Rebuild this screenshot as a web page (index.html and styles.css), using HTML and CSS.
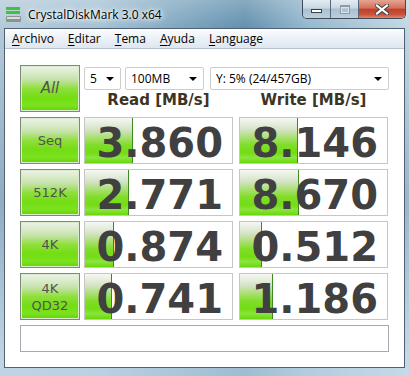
FILE: index.html
```html
<!DOCTYPE html>
<html lang="es">
<head>
    <meta charset="UTF-8">
    <meta name="viewport" content="width=device-width, initial-scale=1.0">
    <title>CrystalDiskMark 3.0 x64</title>
    <link rel="stylesheet" href="styles.css">
</head>
<body>
    <div class="window">
        <div class="titlebar">
            <svg class="app-icon" width="17" height="17" viewBox="0 0 17 17">
                <rect x="1" y="1" width="14" height="3" fill="#3cc43c"/>
                <rect x="1" y="5" width="14" height="3" fill="#3cc43c"/>
                <rect x="1" y="10" width="15" height="6" rx="1" fill="#8c9296"/>
                <rect x="2" y="11" width="13" height="2" fill="#d8dcde"/>
                <rect x="3" y="14" width="2" height="1" fill="#3cc43c"/>
            </svg>
            <span class="title">CrystalDiskMark 3.0 x64</span>
            <div class="caption">
                <div class="cap-btn min"><span class="min-glyph"></span></div>
                <div class="cap-btn max"><span class="max-glyph"></span></div>
                <div class="cap-btn close">
                    <svg width="14" height="11" viewBox="0 0 14 11">
                        <path d="M2 1.5 L12 9.5 M12 1.5 L2 9.5" stroke="#3a3f48" stroke-width="4" stroke-linecap="square"/>
                        <path d="M2 1.5 L12 9.5 M12 1.5 L2 9.5" stroke="#ffffff" stroke-width="2.2" stroke-linecap="square"/>
                    </svg>
                </div>
            </div>
        </div>

        <div class="client">
            <div class="menubar">
                <span class="menu"><u>A</u>rchivo</span>
                <span class="menu"><u>E</u>ditar</span>
                <span class="menu"><u>T</u>ema</span>
                <span class="menu"><u>A</u>yuda</span>
                <span class="menu"><u>L</u>anguage</span>
            </div>

            <div class="main">
                <div class="row top-row">
                    <div class="test-btn all">All</div>
                    <div class="settings">
                        <div class="combos">
                            <div class="combo count">5<span class="arrow"></span></div>
                            <div class="combo size">100MB<span class="arrow"></span></div>
                            <div class="combo drive">Y: 5% (24/457GB)<span class="arrow"></span></div>
                        </div>
                        <div class="headers">
                            <div class="header">Read [MB/s]</div>
                            <div class="header write-head">Write [MB/s]</div>
                        </div>
                    </div>
                </div>

                <div class="row">
                    <div class="test-btn">Seq</div>
                    <div class="result"><div class="bar" style="width: 47px"></div><span class="value">3.860</span></div>
                    <div class="result write"><div class="bar" style="width: 57px"></div><span class="value">8.146</span></div>
                </div>

                <div class="row">
                    <div class="test-btn">512K</div>
                    <div class="result"><div class="bar" style="width: 43px"></div><span class="value">2.771</span></div>
                    <div class="result write"><div class="bar" style="width: 58px"></div><span class="value">8.670</span></div>
                </div>

                <div class="row">
                    <div class="test-btn">4K</div>
                    <div class="result"><div class="bar" style="width: 28px"></div><span class="value">0.874</span></div>
                    <div class="result write"><div class="bar" style="width: 21px"></div><span class="value">0.512</span></div>
                </div>

                <div class="row">
                    <div class="test-btn two-line">4K<br>QD32</div>
                    <div class="result"><div class="bar" style="width: 26px"></div><span class="value">0.741</span></div>
                    <div class="result write"><div class="bar" style="width: 32px"></div><span class="value">1.186</span></div>
                </div>

                <div class="comment"></div>
            </div>
        </div>
    </div>
</body>
</html>
```

FILE: styles.css
```css
body {
    margin: 0;
    font-family: "Open Sans", "DejaVu Sans", sans-serif;
}

.window {
    width: 409px;
    height: 376px;
    box-sizing: border-box;
    padding: 0 4px 8px 4px;
    background:
        linear-gradient(to bottom, rgba(255, 255, 255, 0.25) 0%, rgba(255, 255, 255, 0) 30px, rgba(40, 90, 130, 0.25) 200px, rgba(200, 220, 235, 0.6) 360px),
        linear-gradient(90deg, #b3c9d8 0%, #a2c0d4 25%, #7aa3bd 45%, #5f8eac 60%, #92b6cc 75%, #c2d6e3 100%);
}

.titlebar {
    height: 28px;
    display: flex;
    align-items: center;
}

.app-icon {
    margin-left: 1px;
    margin-top: 1px;
}

.title {
    margin-left: 6px;
    font-size: 12px;
    color: #000;
    text-shadow: 0 0 6px #fff, 0 0 3px #fff, 0 0 10px rgba(255, 255, 255, 0.8);
}

.caption {
    margin-left: auto;
    margin-right: -1px;
    align-self: flex-start;
    display: flex;
    height: 19px;
    border: 1px solid #3d4a5a;
    border-top: none;
    border-radius: 0 0 5px 5px;
    overflow: hidden;
    box-sizing: border-box;
}

.cap-btn {
    display: flex;
    align-items: center;
    justify-content: center;
    background: linear-gradient(to bottom, #e4ecf3 0%, #c8d7e3 45%, #a9bfd0 50%, #bccfdd 100%);
}

.min {
    width: 27px;
    border-right: 1px solid #5a6a7a;
}

.max {
    width: 27px;
    border-right: 1px solid #5a6a7a;
}

.close {
    width: 46px;
    background: linear-gradient(to bottom, #e6a493 0%, #d3705a 45%, #c0402a 52%, #c8523a 80%, #e0886a 100%);
}

.min-glyph {
    width: 9px;
    height: 2px;
    margin-top: 4px;
    background: #fff;
    border: 1px solid #3a3f48;
}

.max-glyph {
    width: 8px;
    height: 6px;
    border: 1px solid #8e9ca8;
    border-top-width: 2px;
    box-shadow: inset 0 0 0 1px #d8e2ea;
}

.client {
    height: 340px;
    border: 1px solid #4f6173;
    background: #fff;
    box-sizing: border-box;
}

.menubar {
    height: 20px;
    box-sizing: border-box;
    display: flex;
    align-items: center;
    background: linear-gradient(to bottom, #fbfcfe 0%, #eef2f8 45%, #dee6f0 100%);
    border-bottom: 1px solid #b6c2d2;
    font-size: 12px;
    color: #000;
}

.menu {
    padding: 0 7px;
    line-height: 19px;
}

.menu u {
    text-underline-offset: 2px;
}

.main {
    padding: 16px 0 0 15px;
}

.row {
    display: flex;
    height: 47px;
    margin-bottom: 5px;
}

.test-btn {
    width: 60px;
    box-sizing: border-box;
    border: 1px solid #7b8b78;
    box-shadow: inset 0 0 0 1px #dcecd0;
    background: linear-gradient(to bottom, #eef3ea 0%, #c6e2aa 30%, #8fdf3c 50%, #74dd12 70%, #7be220 88%, #62d400 100%);
    color: #525252;
    font-family: "DejaVu Sans", sans-serif;
    font-size: 13px;
    display: flex;
    align-items: center;
    justify-content: center;
    text-align: center;
    line-height: 17px;
}

.all {
    font-style: italic;
    font-size: 15px;
}

.settings {
    margin-left: 4px;
    width: 305px;
}

.combos {
    display: flex;
    margin-top: 2px;
    height: 23px;
}

.combo {
    position: relative;
    box-sizing: border-box;
    height: 23px;
    border: 1px solid #cdcdcd;
    border-radius: 2px;
    padding-left: 5px;
    font-size: 12px;
    line-height: 21px;
    color: #000;
}

.count {
    width: 37px;
}

.size {
    width: 79px;
    margin-left: 4px;
}

.drive {
    width: 179px;
    margin-left: 6px;
}

.arrow {
    position: absolute;
    right: 6px;
    top: 9px;
    border-left: 4px solid transparent;
    border-right: 4px solid transparent;
    border-top: 4px solid #000;
}

.headers {
    display: flex;
}

.header {
    width: 149px;
    text-align: center;
    font-family: "DejaVu Sans", sans-serif;
    font-weight: bold;
    font-size: 15px;
    line-height: 21px;
    color: #3d3424;
}

.write-head {
    margin-left: 6px;
}

.result {
    position: relative;
    margin-left: 4px;
    width: 149px;
    height: 47px;
    box-sizing: border-box;
    border: 1px solid #c6c6c6;
    text-align: right;
    padding: 6px 9px 0 0;
}

.result.write {
    margin-left: 6px;
}

.bar {
    position: absolute;
    left: 0;
    top: 0;
    bottom: 0;
    border-right: 1px solid #3e8a22;
    background: linear-gradient(to bottom, #f6f8f3 0%, #d6e3c8 25%, #a6df6c 45%, #80dd28 60%, #74dc14 78%, #8be440 88%, #6ad80a 100%);
}

.value {
    position: relative;
    display: block;
    font-family: "DejaVu Sans", sans-serif;
    font-weight: bold;
    font-size: 40px;
    line-height: 39px;
    color: #404040;
}

.comment {
    margin-top: 5px;
    width: 369px;
    height: 27px;
    box-sizing: border-box;
    border: 1px solid #aba7b2;
}
```
